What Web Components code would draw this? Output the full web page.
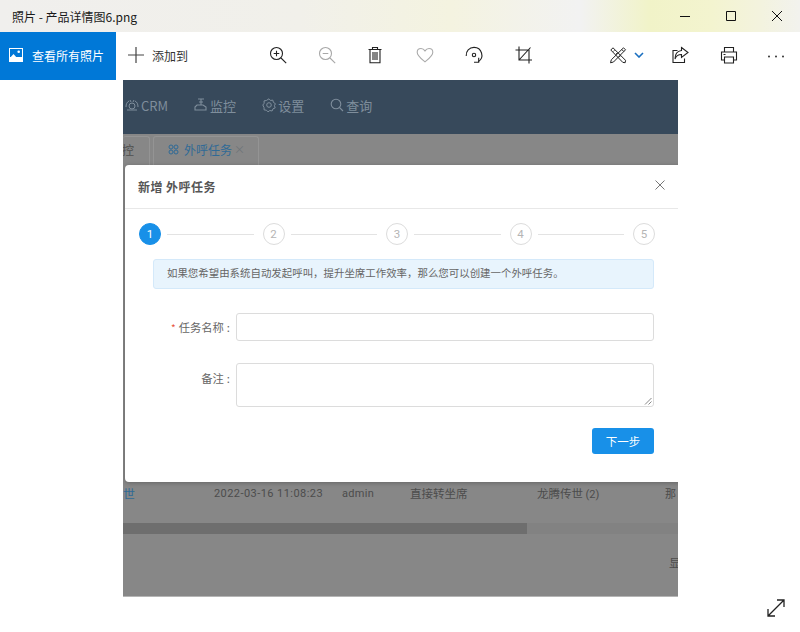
<!DOCTYPE html>
<html lang="zh"><head><meta charset="utf-8"><title>照片</title>
<style>
html,body{margin:0;padding:0;background:#fff}
body{font-family:"Noto Sans CJK SC","Noto Sans",sans-serif;width:800px;height:632px;overflow:hidden}
svg{display:block}
</style></head><body>
<photos-app>
  <title-bar slot="title">照片 - 产品详情图6.png</title-bar>
  <tool-bar slot="tools">
    <icon-btn slot="zoom" title="放大"><svg width="20" height="20" viewBox="0 0 20 20" fill="none" stroke="#222" stroke-width="1.1"><circle cx="8.5" cy="8.5" r="6"/><path d="M13 13l5.2 5.2M5.700 8.500h5.600M8.500 5.700v5.600"/></svg></icon-btn>
    <icon-btn slot="zoom" title="缩小"><svg width="20" height="20" viewBox="0 0 20 20" fill="none" stroke="#a8a8a8" stroke-width="1.1"><circle cx="8.5" cy="8.5" r="6"/><path d="M13 13l5.2 5.2M5.700 8.500h5.600"/></svg></icon-btn>
    <icon-btn slot="zoom" title="删除" style="margin-left:-1px"><svg width="20" height="20" viewBox="0 0 20 20" fill="none" stroke="#222" stroke-width="1.1"><path d="M3.500 4.500h13M7.500 4.500V2.500h5v2M5 4.500v13.200h10V4.500M8 7v8M10 7v8M12 7v8"/></svg></icon-btn>
    <icon-btn slot="zoom" title="收藏" style="margin-left:1px"><svg width="20" height="20" viewBox="0 0 20 20" fill="none" stroke="#aaa" stroke-width="1.1"><path d="M10 16.800C6 13.600 2.200 11 2.200 7.300 2.200 5 4 3.500 6 3.500c1.700 0 3 .9 4 2.400 1-1.500 2.300-2.400 4-2.400 2 0 3.800 1.500 3.800 3.800 0 3.700-3.800 6.300-7.800 9.500z"/></svg></icon-btn>
    <icon-btn slot="zoom" title="旋转"><svg width="20" height="20" viewBox="0 0 20 20" fill="none" stroke="#222" stroke-width="1.1"><path d="M2.200 11A7.800 7.800 0 0 1 10 2.400a7.800 7.800 0 0 1 4.200 14.400"/><path d="M14.700 12.800v4.500H10"/><circle cx="10" cy="10" r="1.700"/></svg></icon-btn>
    <icon-btn slot="zoom" title="裁剪" style="margin-left:1px"><svg width="20" height="20" viewBox="0 0 20 20" fill="none" stroke="#222" stroke-width="1.1"><path d="M5 1.500V15h13M1.500 5H15v13.500M5 15L16.500 2.500"/></svg></icon-btn>
    <icon-btn slot="edit" title="编辑" narrow><svg width="20" height="20" viewBox="0 0 20 20" fill="none" stroke="#222" stroke-width="1"><path d="M15.500 2.800l2 2L5.500 17l-3 .8.800-3zM13.800 4.500l2 2"/><path d="M2.800 5L5 2.800l12.500 12.500-.3 2.400-2.400-.3zM5.300 6.500l1.200-1.200M8 9.200l1.200-1.200M11 12.200l1.200-1.200"/></svg></icon-btn>
    <svg slot="edit" width="10" height="6" viewBox="0 0 10 6" fill="none" stroke="#1a6fc0" stroke-width="1.600"><path d="M1 1l4 4 4-4"/></svg>
    <icon-btn slot="share" title="共享"><svg width="20" height="20" viewBox="0 0 20 20" fill="none" stroke="#222" stroke-width="1.1"><path d="M7.500 5.500H3v12h11.500v-4"/><path d="M11.500 2.500l6.500 5-6.500 5V9.500C8 9.500 6 11 5 14c0-5 2.500-8 6.500-8.500z"/></svg></icon-btn>
    <icon-btn slot="share" title="打印"><svg width="20" height="20" viewBox="0 0 20 20" fill="none" stroke="#222" stroke-width="1.1"><path d="M5.500 7V2.500h9V7M5.500 15H2.500V7h15v8h-3"/><path d="M5.500 12h9v6h-9zM4.500 9.500h2"/></svg></icon-btn>
    <icon-btn slot="share" title="更多" style="margin-left:-2px"><svg width="20" height="20" viewBox="0 0 20 20" fill="#333"><circle cx="3" cy="11.500" r="1"/><circle cx="10" cy="11.500" r="1"/><circle cx="17" cy="11.500" r="1"/></svg></icon-btn>
  </tool-bar>
  <photo-view slot="stage">
    <app-nav slot="nav">
      <nav-item><svg slot="icon" width="14" height="14" viewBox="0 0 14 14" fill="none" stroke="#7f8e9c" stroke-width="1"><circle cx="7" cy="8" r="3"/><path d="M1 9c0-3 1-5 3-6M13 9c0-3-1-5-3-6M5 2l1 2M9 2L8 4M2 12h10"/></svg>CRM</nav-item>
      <nav-item><svg slot="icon" width="14" height="14" viewBox="0 0 14 14" fill="none" stroke="#7f8e9c" stroke-width="1.100"><path d="M4 1h6M7 1v6M3 7h6l3 2v3H1V9zM5 4h4"/></svg>监控</nav-item>
      <nav-item><svg slot="icon" width="14" height="14" viewBox="0 0 14 14" fill="none" stroke="#7f8e9c" stroke-width="1"><circle cx="7" cy="7" r="2.300"/><path d="M7 .8l1.500 1.700 2.300-.4.600 2.300 2 1.300-1 2 .8 2.200-2.200.9-.9 2.200-2.300-.5-1.800 1.400-1.600-1.700-2.300-.3-.1-2.400L.8 7l1.400-1.800-.2-2.300 2.300-.4z"/></svg>设置</nav-item>
      <nav-item><svg slot="icon" width="14" height="14" viewBox="0 0 14 14" fill="none" stroke="#7f8e9c" stroke-width="1.100"><circle cx="6" cy="6" r="4.800"/><path d="M9.500 9.500L13 13"/></svg>查询</nav-item>
    </app-nav>
    <tab-strip slot="tabs"></tab-strip>
    <back-table slot="table"></back-table>
    <task-dialog slot="dialog"></task-dialog>
  </photo-view>
</photos-app>

<script>
function def(name, css, html){
  customElements.define(name, class extends HTMLElement{
    constructor(){super();const r=this.attachShadow({mode:'open'});r.innerHTML='<style>'+css+'</style>'+html;}
  });
}
def('photos-app',
 ':host{display:flex;flex-direction:column;width:800px;height:632px;font-family:"Noto Sans CJK SC","Noto Sans",sans-serif}',
 '<slot name="title"></slot><slot name="tools"></slot><slot name="stage"></slot>');

def('title-bar',
 `:host{display:flex;align-items:center;height:32px;flex:none;padding-left:12px;box-sizing:border-box;font-size:12px;color:#1a1a1a;
   background:linear-gradient(90deg,#f0efed 0,#f1f0ea 300px,#f4f3e0 450px,#f2f2f2 580px,#f1f3c8 650px,#f3f4cf 710px,#f3f3de 760px,#f2f2ee 800px)}
  .t{flex:1}
  .c{width:46px;height:32px;display:flex;align-items:center;justify-content:center}
  svg{display:block}`,
 `<span class="t"><slot></slot></span>
  <span class="c"><svg width="12" height="12" viewBox="0 0 12 12" stroke="#111" fill="none"><path d="M1 6.500h10"/></svg></span>
  <span class="c"><svg width="12" height="12" viewBox="0 0 12 12" stroke="#111" fill="none"><path d="M1.500 1.500h9v9h-9z"/></svg></span>
  <span class="c"><svg width="12" height="12" viewBox="0 0 12 12" stroke="#111" fill="none"><path d="M1 1l10 10M11 1L1 11"/></svg></span>`);

def('tool-bar',
 `:host{display:flex;align-items:center;height:48px;flex:none;background:#fff;font-size:12px;color:#333;box-sizing:border-box}
  .all{width:116px;height:48px;background:#0078d7;color:#fff;display:flex;align-items:center;box-sizing:border-box;padding:0 0 2px 9px;gap:9px;flex:none}
  .add{display:flex;align-items:center;padding:0 0 2px 12px;height:48px;gap:8px;width:137px;box-sizing:border-box;flex:none}
  .group{display:flex;align-items:center;height:46px;margin-bottom:2px}
  .edit{margin-left:61px;width:47px;gap:6px;flex:none}
  .zoomset{width:294px;flex:none}
  svg{display:block}`,
 `<div class="all"><svg width="14" height="14" viewBox="0 0 14 14"><rect width="14" height="14" fill="#fff"/><rect x="1" y="1" width="12" height="8" fill="#0078d7"/><circle cx="9.700" cy="3.800" r="1.300" fill="#fff"/><path d="M0 11l4.500-5 4 4.500L10.500 9l3.500 3.500V14H0z" fill="#fff"/></svg><span>查看所有照片</span></div>
  <div class="add"><svg width="16" height="16" viewBox="0 0 16 16" stroke="#444" stroke-width="1.200"><path d="M8 0v16M0 8h16"/></svg><span>添加到</span></div>
  <div class="group zoomset"><slot name="zoom"></slot></div>
  <div class="group edit"><slot name="edit"></slot></div>
  <div class="group"><slot name="share"></slot></div>`);

def('icon-btn',
 `:host{display:flex;align-items:center;justify-content:center;width:49px;height:46px;flex:none}
  :host([narrow]){width:20px;justify-content:flex-start}`,
 '<slot></slot>');

def('photo-view',
 `:host{display:flex;flex:1;min-height:0;background:#fff;padding-left:123px}
  .pic{position:relative;width:555px;height:517px;overflow:hidden;background:#878787;display:flex;flex-direction:column;flex:none}
  .pic::after{content:"";position:absolute;left:0;right:0;bottom:0;height:1px;background:#b5b5b5}
  .exp{align-self:flex-end;margin:0 0 14px 88px}
  svg{display:block}`,
 `<div class="pic"><slot name="nav"></slot><slot name="tabs"></slot><slot name="table"></slot><slot name="dialog"></slot></div>
  <svg class="exp" width="20" height="20" viewBox="0 0 20 20" fill="none" stroke="#222" stroke-width="1.300"><path d="M2 18L18 2M11 2h7v7M2 11v7h7"/></svg>`);

def('app-nav',
 `:host{display:flex;align-items:center;height:54px;flex:none;box-sizing:border-box;padding:0 0 4px 2px;background:#37495b;font-size:13px;color:#7f8e9c;white-space:nowrap}`,
 '<slot></slot>');

def('nav-item',
 `:host{display:flex;align-items:center;gap:2px;margin-right:26px;flex:none}`,
 '<slot name="icon"></slot><slot></slot>');

def('tab-strip',
 `:host{display:flex;align-items:flex-end;height:31px;flex:none;background:#878787;font-size:12px;color:#4f4f4f;box-sizing:border-box;gap:3px;white-space:nowrap}
  .t{height:29px;border:1px solid #949494;border-bottom:0;border-radius:3px 3px 0 0;box-sizing:border-box;display:flex;align-items:center;padding-bottom:4px}
  .a{width:27px;justify-content:flex-end;padding-right:15px;border-left:0;overflow:hidden}
  .b{width:106px;padding-left:14px;gap:5px;color:#2f6a96}
  .x{color:#6e7478;font-size:11px;margin-left:-3px}
  svg{display:block}`,
 `<div class="t a"><span>控</span></div>
  <div class="t b"><svg width="11" height="11" viewBox="0 0 11 11" fill="none" stroke="#2f6a96"><circle cx="3" cy="3" r="2"/><circle cx="8" cy="3" r="2"/><circle cx="3" cy="8" r="2"/><circle cx="8" cy="8" r="2"/></svg><span>外呼任务</span><span class="x">×</span></div>`);

def('back-table',
 `:host{display:flex;flex-direction:column;flex:1;min-height:0;font-size:11px;color:#4c4c4c;white-space:nowrap}
  .row{display:flex;align-items:center;height:20px;margin-top:318px;flex:none}
  .c{flex:none;overflow:hidden}
  .link{color:#2f6a96;font-size:12px;width:91px}
  .d{width:128px;font-family:Roboto,sans-serif;letter-spacing:.04em}
  .u{width:68px;font-family:Roboto,sans-serif;letter-spacing:.03em}
  .w{width:127px;font-size:11.500px}
  .g{width:128px;font-size:11.500px}
  .g small{font-family:Roboto,sans-serif;font-size:11px}
  .scroll{height:11px;margin-top:20px;flex:none;background:#828282}
  .thumb{width:404px;height:11px;background:#6e6e6e}
  .foot{margin-top:20px;padding-left:546px;font-size:12px;overflow:hidden}`,
 `<div class="row"><span class="c link">世</span><span class="c d">2022-03-16 11:08:23</span><span class="c u">admin</span><span class="c w">直接转坐席</span><span class="c g">龙腾传世 <small>(2)</small></span><span class="c">那</span></div>
  <div class="scroll"><div class="thumb"></div></div>
  <div class="foot">显</div>`);

def('task-dialog',
 `:host{position:absolute;left:2px;top:85px;width:580px;height:317px;background:#fff;border-radius:4px 0 0 4px;box-shadow:0 1px 4px rgba(0,0,0,.25);display:flex;flex-direction:column;color:#666;font-size:11px}
  .inner{width:553px;display:flex;flex-direction:column;height:100%;box-sizing:border-box}
  header{height:44px;flex:none;border-bottom:1px solid #e8e8e8;display:flex;align-items:center;justify-content:space-between;box-sizing:border-box;padding:0 13px;font-size:12px;font-weight:700;color:#555;letter-spacing:.45px}
  header svg{margin-top:-4px}
  .body{padding:14px 24px 0 14px;display:flex;flex-direction:column}
  .alert{margin:14px 0 0 14px;height:30px;box-sizing:border-box;background:#e8f4fd;border:1px solid #d4e9fa;border-radius:3px;font-size:10.450px;color:#666;display:flex;align-items:center;padding:0 0 3px 13px;white-space:nowrap}
  .row{display:flex;margin-top:22px}
  .row.first{margin-top:24px}
  .l{width:97px;flex:none;text-align:right;font-size:11.300px;color:#666;line-height:28px;box-sizing:border-box;padding-right:6px}
  .l i{font-style:normal;color:#e8553e;font-size:10px;margin-right:3px}
  .l b{font-weight:400;margin-left:3px}
  .l.m{line-height:30px}
  .f{width:418px;box-sizing:border-box;border:1px solid #dcdcdc;border-radius:3px;flex:none;background:#fff;position:relative}
  .in{height:28px}
  .ta{height:44px}
  .ta svg{position:absolute;right:1px;bottom:1px}
  .row.sec{margin-top:21px}
  .act{display:flex;justify-content:flex-end;margin-top:21px}
  button{width:62px;height:26px;border:0;border-radius:3px;background:#1890e8;color:#fff;font-size:11.500px;padding:0;font-family:inherit}`,
 `<div class="inner">
   <header><span>新增 外呼任务</span><svg width="10" height="10" viewBox="0 0 10 10" stroke="#777" fill="none"><path d="M.5 .5l9 9M9.500 .5l-9 9"/></svg></header>
   <div class="body">
     <step-bar></step-bar>
     <div class="alert">如果您希望由系统自动发起呼叫，提升坐席工作效率，那么您可以创建一个外呼任务。</div>
     <div class="row first"><div class="l"><i>*</i>任务名称<b>:</b></div><div class="f in"></div></div>
     <div class="row sec"><div class="l m">备注<b>:</b></div><div class="f ta"><svg width="8" height="8" viewBox="0 0 8 8" stroke="#888" fill="none"><path d="M1 7.500L7.500 1M4.500 7.500l3-3"/></svg></div></div>
     <div class="act"><button>下一步</button></div>
   </div>
  </div>`);

def('step-bar',
 `:host{display:flex;align-items:center;height:22px;flex:none;width:516px}
  .s{width:22px;height:22px;border-radius:50%;box-sizing:border-box;border:1px solid #dcdcdc;color:#b5b5b5;font-size:11.500px;display:flex;align-items:center;justify-content:center;flex:none;font-family:Roboto,sans-serif}
  .s.on{background:#1890e8;border-color:#1890e8;color:#fff}
  .l{flex:1;height:1px;background:#e3e3e3;margin:0 9px 0 6px}`,
 `<span class="s on">1</span><span class="l"></span><span class="s">2</span><span class="l"></span><span class="s">3</span><span class="l"></span><span class="s">4</span><span class="l"></span><span class="s">5</span>`);
</script>
</body></html>
